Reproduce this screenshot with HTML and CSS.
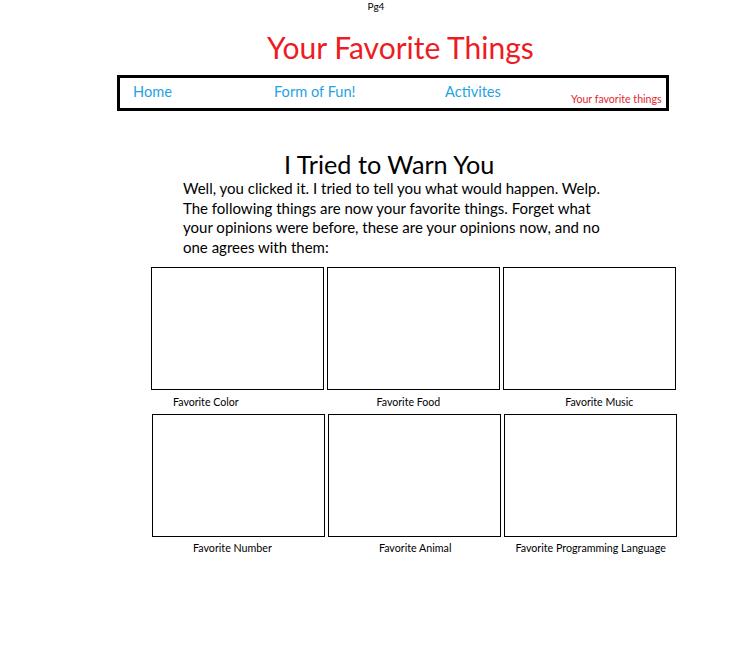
FILE: index.html
```html
<!DOCTYPE html>
<html>
<head>
<meta charset="utf-8">
<title>Your Favorite Things</title>
<link rel="stylesheet" href="styles.css">
</head>
<body>
<div class="pg">Pg4</div>
<h1 class="title">Your Favorite Things</h1>
<nav class="nav">
  <a class="nav-link" href="#">Home</a>
  <a class="nav-link" href="#">Form of Fun!</a>
  <a class="nav-link" href="#">Activites</a>
  <span class="nav-current">Your favorite things</span>
</nav>
<main class="content">
  <h2 class="heading">I Tried to Warn You</h2>
  <p class="intro">Well, you clicked it. I tried to tell you what would happen. Welp. The following things are now your favorite things. Forget what your opinions were before, these are your opinions now, and no one agrees with them:</p>
  <div class="row row-1">
    <div class="box"></div>
    <div class="box"></div>
    <div class="box"></div>
  </div>
  <div class="captions captions-1">
    <span class="cap cap-color">Favorite Color</span>
    <span class="cap cap-food">Favorite Food</span>
    <span class="cap cap-music">Favorite Music</span>
  </div>
  <div class="row row-2">
    <div class="box"></div>
    <div class="box"></div>
    <div class="box"></div>
  </div>
  <div class="captions captions-2">
    <span class="cap cap-number">Favorite Number</span>
    <span class="cap cap-animal">Favorite Animal</span>
    <span class="cap cap-lang">Favorite Programming Language</span>
  </div>
</main>
</body>
</html>
```

FILE: styles.css
```css
* { box-sizing: border-box; }
html, body { background: #fff; }
body {
  margin: 0;
  font-family: Lato, "Open Sans", sans-serif;
  color: #000;
}
.pg {
  font-size: 10px;
  line-height: 13px;
  text-align: center;
}
.title {
  margin: 0;
  padding: 17px 0 0 267px;
  font-size: 30px;
  line-height: 34px;
  font-weight: 400;
  color: #ed1c24;
  white-space: nowrap;
}
.nav {
  margin: 11px 0 0 117px;
  width: 552px;
  height: 36px;
  border: 3px solid #000;
  display: grid;
  grid-template-columns: 141px 171px 126px 1fr;
  padding-left: 13px;
}
.nav-link {
  color: #1fa3e0;
  text-decoration: none;
  font-size: 14.6px;
  line-height: 28px;
}
.nav-current {
  color: #e3262e;
  font-size: 10.6px;
  line-height: 12px;
  padding-top: 15px;
  white-space: nowrap;
}
.content {
  padding-top: 39px;
}
.heading {
  margin: 0;
  padding-left: 284px;
  font-size: 25.2px;
  line-height: 28px;
  font-weight: 400;
}
.intro {
  margin: 1px 0 0 183px;
  width: 430px;
  font-size: 15px;
  line-height: 19.6px;
}
.row {
  display: flex;
  gap: 3px;
  margin-top: 10px;
  padding-left: 151px;
}
.row-2 {
  margin-top: 5px;
  padding-left: 152px;
}
.box {
  width: 173px;
  height: 123px;
  border: 1px solid #000;
}
.captions {
  display: flex;
  font-size: 10.6px;
  line-height: 13px;
  padding-top: 6px;
  white-space: nowrap;
}
.captions-2 {
  padding-top: 4px;
  font-size: 10.7px;
}
.cap-color { margin-left: 173px; }
.cap-food { margin-left: 138px; }
.cap-music { margin-left: 125px; }
.cap-number { margin-left: 193px; }
.cap-animal { margin-left: 107px; }
.cap-lang { margin-left: 64px; }
```
